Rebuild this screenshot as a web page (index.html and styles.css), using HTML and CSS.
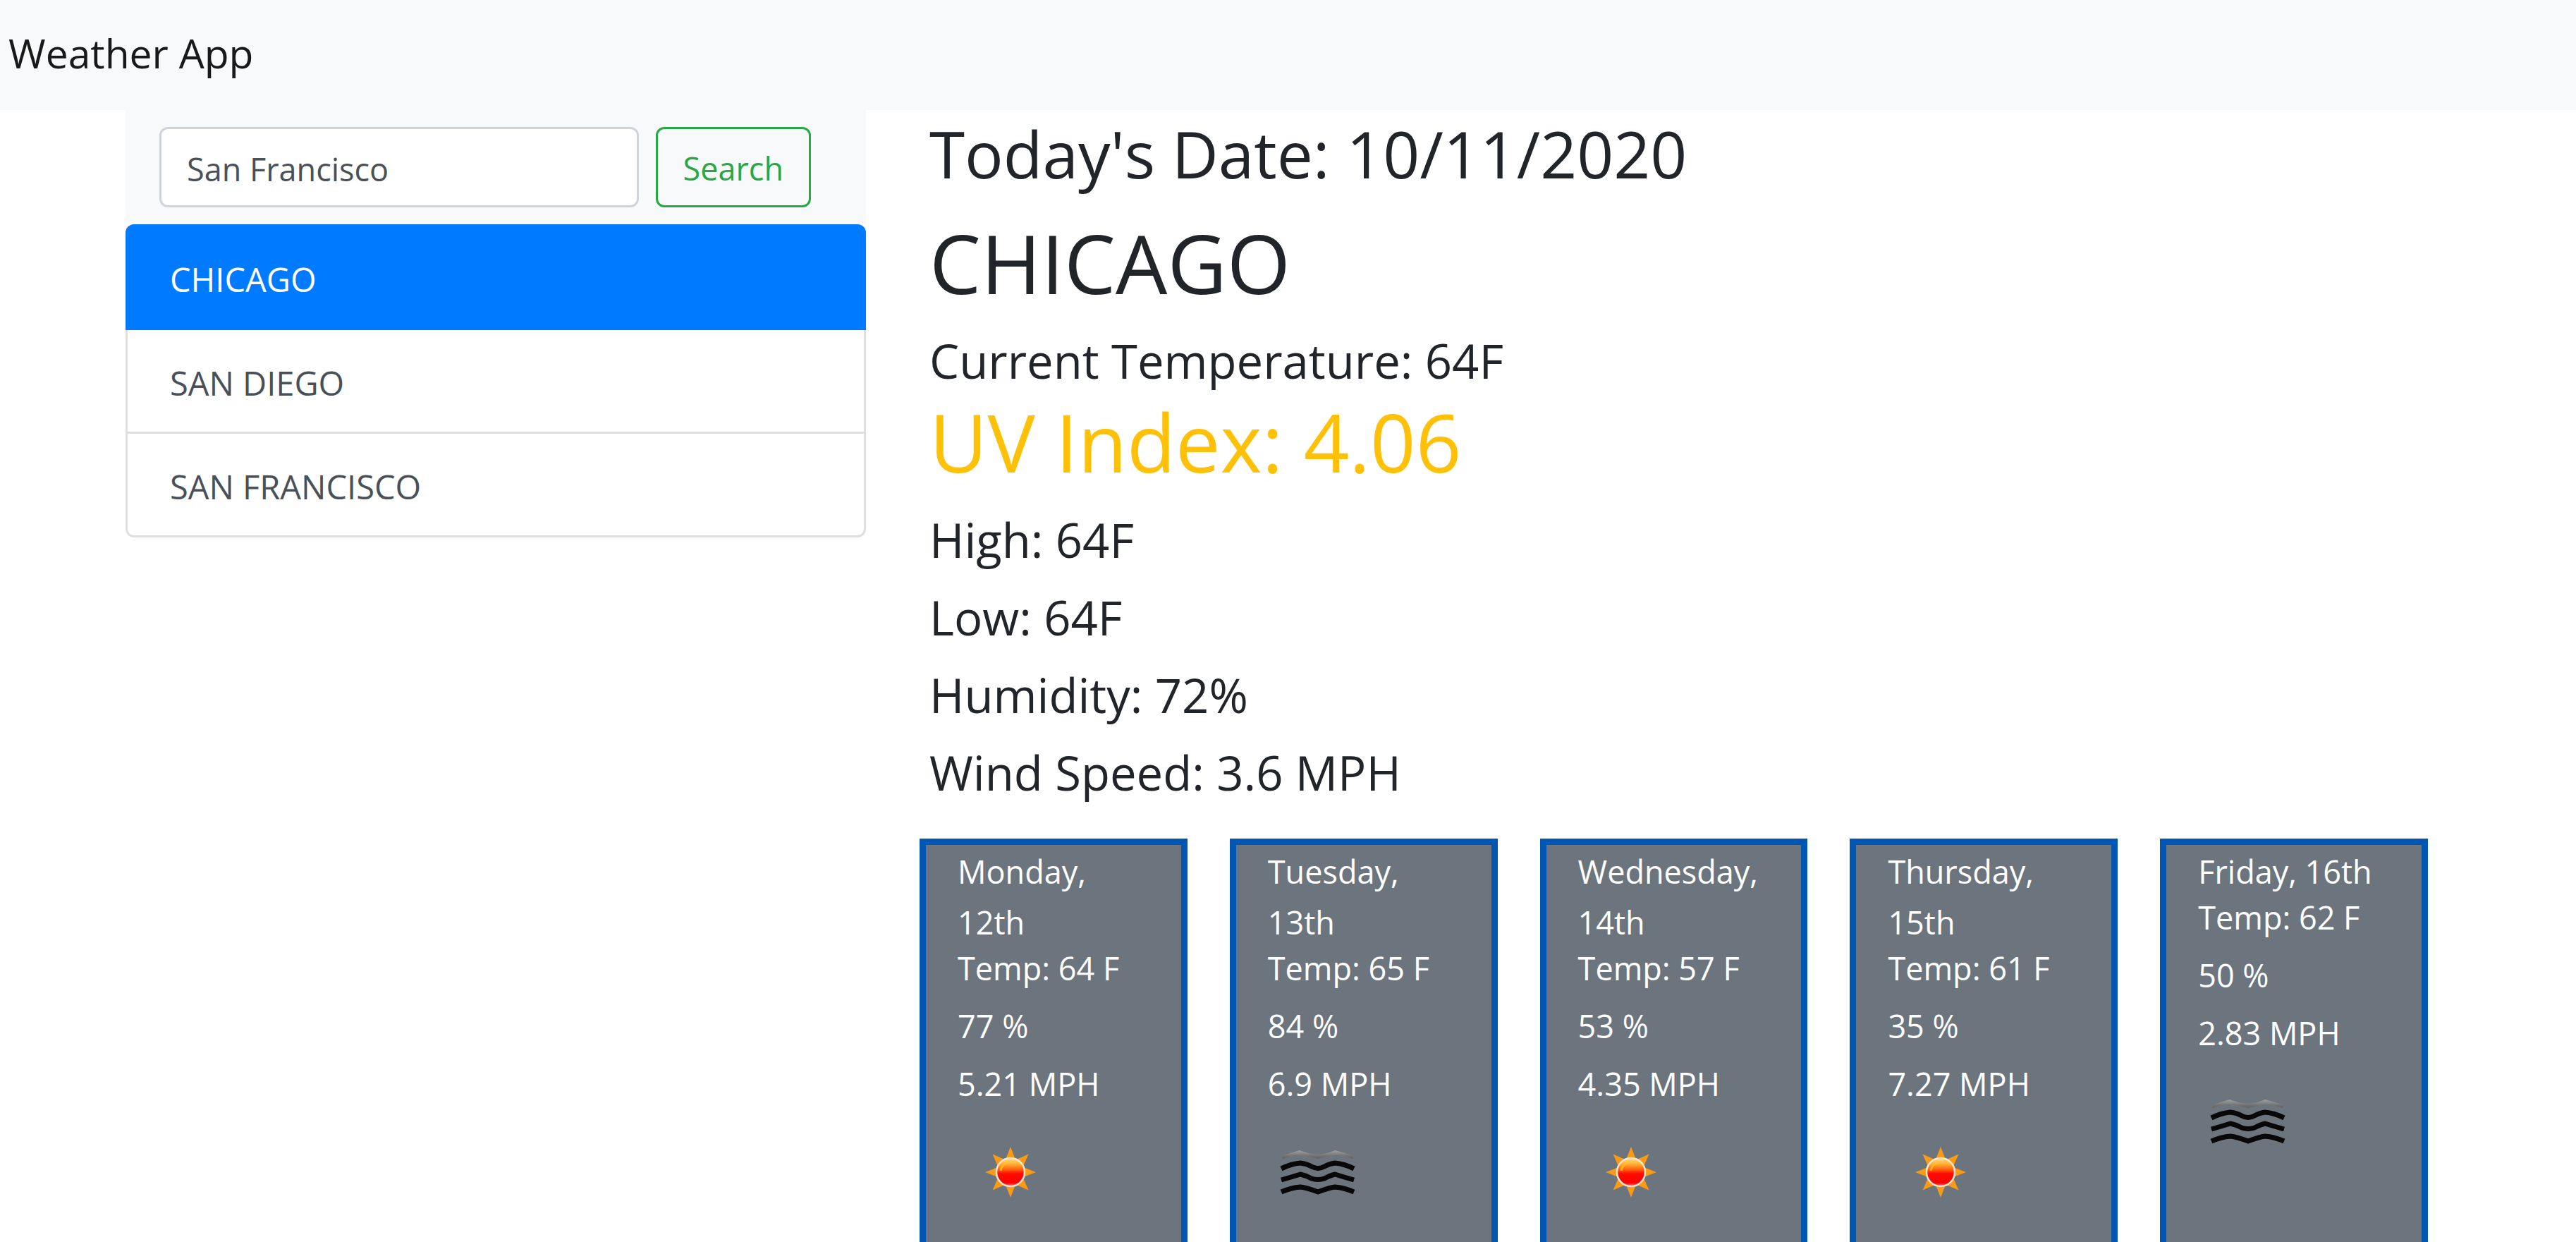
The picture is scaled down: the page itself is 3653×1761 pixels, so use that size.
FILE: index.html
```html
<!DOCTYPE html>
<html lang="en">
<head>
  <meta charset="utf-8">
  <meta name="viewport" content="width=device-width, initial-scale=1">
  <title>Weather App</title>
  <link rel="stylesheet" href="styles.css">
</head>
<body>
  <svg class="sprite" aria-hidden="true">
    <defs>
      <linearGradient id="sun-fill" x1="0" y1="0" x2="0" y2="1">
        <stop offset="0" stop-color="#ffe08a"/>
        <stop offset="0.2" stop-color="#ffb437"/>
        <stop offset="0.42" stop-color="#ff5a08"/>
        <stop offset="0.55" stop-color="#ff0a00"/>
        <stop offset="0.88" stop-color="#ff0000"/>
        <stop offset="1" stop-color="#ff7a7a"/>
      </linearGradient>
      <linearGradient id="mist-fill" x1="0" y1="0" x2="0" y2="1">
        <stop offset="0" stop-color="#a0a0a0"/>
        <stop offset="1" stop-color="#5c5c5c"/>
      </linearGradient>
    </defs>
    <symbol id="icon-sun" viewBox="0 0 150 150">
      <g transform="translate(75 72)">
        <g fill="#fb9a14">
          <path id="ray" d="M-7 -18 L0 -36 L7 -18Z"/>
          <use href="#ray" transform="rotate(45)"/>
          <use href="#ray" transform="rotate(90)"/>
          <use href="#ray" transform="rotate(135)"/>
          <use href="#ray" transform="rotate(180)"/>
          <use href="#ray" transform="rotate(225)"/>
          <use href="#ray" transform="rotate(270)"/>
          <use href="#ray" transform="rotate(315)"/>
        </g>
        <circle r="20" fill="url(#sun-fill)" stroke="#fbe6d0" stroke-width="2.5"/>
        <path d="M-14 -2 A15 15 0 0 1 -6 -13" fill="none" stroke="#ffc420" stroke-width="3" opacity="0.8"/>
      </g>
    </symbol>
    <symbol id="icon-mist" viewBox="0 0 150 150">
      <path d="M20 49 Q33 44 45 41 Q58 46 71 47 Q84 46 95 41 Q108 44 121 49 L120 53 Q108 48 95 48 Q84 49 71 53 Q58 49 45 48 Q33 48 21 53Z" fill="url(#mist-fill)"/>
      <g fill="none" stroke="#080808" stroke-width="7" stroke-linejoin="round">
        <path d="M19 67 Q33 60 46 59 Q55 60 62 64 Q71 69 80 64 Q87 60 95 59 Q108 60 122 67"/>
        <path d="M19 83 Q33 79 46 75 Q55 77 62 81 Q71 84 80 81 Q87 77 95 75 Q108 79 122 83"/>
        <path d="M19 100 Q33 94 46 93 Q55 94 71 100 Q87 94 95 93 Q108 94 122 100"/>
      </g>
    </symbol>
  </svg>

  <header class="navbar">
    <a class="brand" href="#">Weather App</a>
  </header>

  <div class="layout">
    <aside class="sidebar">
      <form class="search">
        <input class="search-input" type="search" aria-label="City" value="San Francisco">
        <button class="search-button" type="button">Search</button>
      </form>
      <nav class="cities" aria-label="Saved cities">
        <a class="city city-active" href="#">CHICAGO</a>
        <a class="city" href="#">SAN DIEGO</a>
        <a class="city" href="#">SAN FRANCISCO</a>
      </nav>
    </aside>

    <main class="weather">
      <h2 class="today">Today's Date: 10/11/2020</h2>
      <h1 class="city-name">CHICAGO</h1>
      <h4 class="stat stat-flush">Current Temperature: 64F</h4>
      <p class="uv">UV Index: 4.06</p>
      <h4 class="stat">High: 64F</h4>
      <h4 class="stat">Low: 64F</h4>
      <h4 class="stat">Humidity: 72%</h4>
      <h4 class="stat">Wind Speed: 3.6 MPH</h4>

      <section class="forecast" aria-label="Five day forecast">
        <article class="day">
          <div class="day-date">Monday, 12th</div>
          <p class="day-stat">Temp: 64 F</p>
          <p class="day-stat">77 %</p>
          <p class="day-stat">5.21 MPH</p>
          <svg class="day-icon" role="img" aria-label="Clear"><use href="#icon-sun"/></svg>
        </article>
        <article class="day">
          <div class="day-date">Tuesday, 13th</div>
          <p class="day-stat">Temp: 65 F</p>
          <p class="day-stat">84 %</p>
          <p class="day-stat">6.9 MPH</p>
          <svg class="day-icon" role="img" aria-label="Mist"><use href="#icon-mist"/></svg>
        </article>
        <article class="day">
          <div class="day-date">Wednesday, 14th</div>
          <p class="day-stat">Temp: 57 F</p>
          <p class="day-stat">53 %</p>
          <p class="day-stat">4.35 MPH</p>
          <svg class="day-icon" role="img" aria-label="Clear"><use href="#icon-sun"/></svg>
        </article>
        <article class="day">
          <div class="day-date">Thursday, 15th</div>
          <p class="day-stat">Temp: 61 F</p>
          <p class="day-stat">35 %</p>
          <p class="day-stat">7.27 MPH</p>
          <svg class="day-icon" role="img" aria-label="Clear"><use href="#icon-sun"/></svg>
        </article>
        <article class="day">
          <div class="day-date">Friday, 16th</div>
          <p class="day-stat">Temp: 62 F</p>
          <p class="day-stat">50 %</p>
          <p class="day-stat">2.83 MPH</p>
          <svg class="day-icon" role="img" aria-label="Mist"><use href="#icon-mist"/></svg>
        </article>
      </section>
    </main>
  </div>
</body>
</html>
```
FILE: styles.css
```css
* {
  box-sizing: border-box;
}

body {
  margin: 0;
  background: #fff;
  color: #212529;
  font-family: "Segoe UI", "Open Sans", "Noto Sans", sans-serif;
  font-size: 45px;
  line-height: 72px;
}

h1, h2, h4, p {
  margin: 0;
  font-weight: 400;
}

.sprite {
  position: absolute;
  width: 0;
  height: 0;
}

.navbar {
  padding: 30px 12px 36px;
  background: #f8f9fa;
}

.brand {
  display: block;
  color: rgba(0, 0, 0, 0.9);
  font-size: 57px;
  line-height: 90px;
  text-decoration: none;
}

.layout {
  display: grid;
  grid-template-columns: minmax(0, 1fr) minmax(0, 2fr);
  padding: 0 100px 0 133px;
}

.sidebar {
  padding: 0 45px;
}

.search {
  display: flex;
  gap: 24px;
  padding: 24px 78px 24px 48px;
  background: #f8f9fa;
}

.search-input,
.search-button {
  height: 114px;
  border: 3px solid #ced4da;
  border-radius: 12px;
  padding: 4px 36px 0;
  font: inherit;
}

.search-input {
  flex: 1;
  min-width: 0;
  appearance: none;
  background: #fff;
  color: #495057;
}

.search-button {
  border-color: #28a745;
  background: transparent;
  color: #28a745;
}

.cities {
  display: flex;
  flex-direction: column;
  border: 3px solid #dfdfdf;
  border-top: 0;
  border-radius: 12px;
}

.city {
  padding: 39px 60px 33px;
  border-top: 3px solid #dfdfdf;
  color: #495057;
  font-size: 47px;
  line-height: 72px;
  text-decoration: none;
}

.city-active {
  margin: 0 -3px;
  padding: 42px 63px 36px;
  border-top: 0;
  border-radius: 12px 12px 0 0;
  background: #007bff;
  color: #fff;
}

.city-active + .city {
  border-top: 0;
}

.weather {
  padding: 5px 45px 0;
}

.today {
  margin-bottom: 24px;
  font-size: 91px;
  line-height: 115px;
}

.city-name {
  margin-bottom: 24px;
  font-size: 116px;
  line-height: 144px;
}

.stat {
  margin-bottom: 24px;
  font-size: 67px;
  line-height: 86px;
}

.stat-flush {
  margin-bottom: 0;
}

.uv {
  margin-bottom: 24px;
  color: #ffc107;
  font-size: 113px;
  line-height: 144px;
}

.forecast {
  display: grid;
  grid-template-columns: repeat(5, minmax(0, 1fr));
  gap: 60px;
  margin: 51px 65px 0 -14px;
}

.day {
  padding: 2px 45px 24px;
  border: 9px solid #0056b3;
  background: #6c757d;
  color: #fff;
}

.day-stat {
  margin-bottom: 24px;
  line-height: 58px;
}

.day-icon {
  display: block;
  width: 150px;
  height: 150px;
}
```
